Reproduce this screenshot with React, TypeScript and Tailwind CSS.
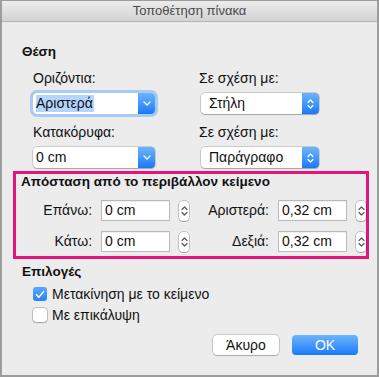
import React from 'react';

function ChevronDown() {
  return (
    <svg width="8" height="5" viewBox="0 0 8 5">
      <path d="M1 1l3 3 3-3" fill="none" stroke="white" strokeWidth="1.3" strokeLinecap="round" strokeLinejoin="round" />
    </svg>
  );
}

function UpDown({ color = 'white' }: { color?: string }) {
  return (
    <svg width="7" height="12" viewBox="0 0 7 12">
      <path d="M1 4.5l2.5-2.5 2.5 2.5M1 7.5l2.5 2.5 2.5-2.5" fill="none" stroke={color} strokeWidth="1.2" strokeLinecap="round" strokeLinejoin="round" />
    </svg>
  );
}

function Popup({ value, wide, kind, focused }: { value: string; wide: boolean; kind: 'pull' | 'pop'; focused?: boolean }) {
  return (
    <div
      className={`flex h-[21px] rounded-[4px] bg-white shadow-[0_0_0_0.5px_rgba(0,0,0,0.28),0_1px_1px_rgba(0,0,0,0.18)] ${
        wide ? 'w-[122px]' : 'w-[118px]'
      } ${focused ? 'outline outline-[3.5px] outline-[#a9cbf3]' : ''}`}
    >
      <div className="flex flex-1 items-center pl-[3px]">
        <span className={`leading-[17px] ${focused ? 'bg-[#b4d5fe] pr-[1px]' : kind === 'pop' ? 'pl-[5px]' : ''}`}>{value}</span>
      </div>
      <div className="flex w-[17px] items-center justify-center rounded-r-[4px] bg-gradient-to-b from-[#6cb4fb] to-[#1479fa]">
        {kind === 'pull' ? <ChevronDown /> : <UpDown />}
      </div>
    </div>
  );
}

function Stepper() {
  return (
    <div className="flex h-[20px] w-[10px] items-center justify-center rounded-[4px] bg-white shadow-[0_0_0_0.5px_rgba(0,0,0,0.35),0_1px_1px_rgba(0,0,0,0.15)]">
      <UpDown color="#555" />
    </div>
  );
}

function Field({ value }: { value: string }) {
  return (
    <div className="flex h-[21px] w-[69px] items-center border border-[#b9b9b9] bg-white pl-[3px] shadow-[inset_0_1px_0_rgba(0,0,0,0.06)]">
      {value}
    </div>
  );
}

function SpacingRow({ a, av, b, bv }: { a: string; av: string; b: string; bv: string }) {
  return (
    <div className="flex h-[21px] items-center">
      <span className="w-[77px] text-right">{a}</span>
      <div className="ml-[9px]"><Field value={av} /></div>
      <div className="ml-[9px]"><Stepper /></div>
      <span className="w-[81px] text-right">{b}</span>
      <div className="ml-[9px]"><Field value={bv} /></div>
      <div className="ml-[9px]"><Stepper /></div>
    </div>
  );
}

function Check({ checked }: { checked: boolean }) {
  return checked ? (
    <div className="flex h-[14px] w-[14px] items-center justify-center rounded-[3px] bg-gradient-to-b from-[#5aa8fa] to-[#2582f5]">
      <svg width="10" height="9" viewBox="0 0 10 9">
        <path d="M1.5 4.8l2.3 2.6L8.6 1.5" fill="none" stroke="white" strokeWidth="1.5" strokeLinecap="round" strokeLinejoin="round" />
      </svg>
    </div>
  ) : (
    <div className="h-[14px] w-[14px] rounded-[3px] bg-white shadow-[0_0_0_0.5px_rgba(0,0,0,0.35),0_1px_1px_rgba(0,0,0,0.15)]" />
  );
}

export default function App() {
  return (
    <div className="flex h-[377px] w-[379px] flex-col border-x-2 border-b-2 border-t border-[#9c9c9c] bg-[#ececec] font-['Liberation_Sans',Arial,sans-serif] text-[14px] text-[#111]">
      <div className="flex h-[21px] items-center justify-center border-b border-[#b3b3b3] bg-gradient-to-b from-[#ececec] to-[#d3d3d3] text-[13px] text-[#4a4a4a]">
        Τοποθέτηση πίνακα
      </div>

      <div className="ml-[20px] mt-[22px] text-[13.5px] font-bold leading-4">Θέση</div>

      <div className="flex">
        <div className="ml-[31px] flex w-[166px] flex-col">
          <span className="mt-[10px] leading-4">Οριζόντια:</span>
          <div className="mt-[7px]"><Popup value="Αριστερά" wide kind="pull" focused /></div>
          <span className="mt-[10px] leading-4">Κατακόρυφα:</span>
          <div className="mt-[7px]"><Popup value="0 cm" wide kind="pull" /></div>
        </div>
        <div className="flex flex-col">
          <span className="mt-[10px] leading-4">Σε σχέση με:</span>
          <div className="ml-[2px] mt-[7px]"><Popup value="Στήλη" wide={false} kind="pop" /></div>
          <span className="mt-[10px] leading-4">Σε σχέση με:</span>
          <div className="ml-[2px] mt-[7px]"><Popup value="Παράγραφο" wide={false} kind="pop" /></div>
        </div>
      </div>

      <div className="ml-[11px] mt-[3px] flex w-[356px] flex-col border-[3px] border-[#e4157f] pb-[4px]">
        <div className="pl-[5px] text-[13.5px] font-bold leading-4">Απόσταση από το περιβάλλον κείμενο</div>
        <div className="mt-[10px]"><SpacingRow a="Επάνω:" av="0 cm" b="Αριστερά:" bv="0,32 cm" /></div>
        <div className="mt-[10px]"><SpacingRow a="Κάτω:" av="0 cm" b="Δεξιά:" bv="0,32 cm" /></div>
      </div>

      <div className="ml-[20px] mt-[5px] text-[13.5px] font-bold leading-4">Επιλογές</div>
      <div className="ml-[31px] mt-[6px] flex h-4 items-center gap-[5px]">
        <Check checked />
        <span>Μετακίνηση με το κείμενο</span>
      </div>
      <div className="ml-[31px] mt-[5px] flex h-4 items-center gap-[5px]">
        <Check checked={false} />
        <span>Με επικάλυψη</span>
      </div>

      <div className="mt-[12px] flex justify-end gap-[13px] pr-[19px]">
        <button className="h-[20px] w-[66px] rounded-[4px] bg-white shadow-[0_0_0_0.5px_rgba(0,0,0,0.3),0_1px_1px_rgba(0,0,0,0.15)]">Άκυρο</button>
        <button className="h-[20px] w-[66px] rounded-[4px] bg-gradient-to-b from-[#6cb4fb] to-[#1479fa] text-white">OK</button>
      </div>
    </div>
  );
}
